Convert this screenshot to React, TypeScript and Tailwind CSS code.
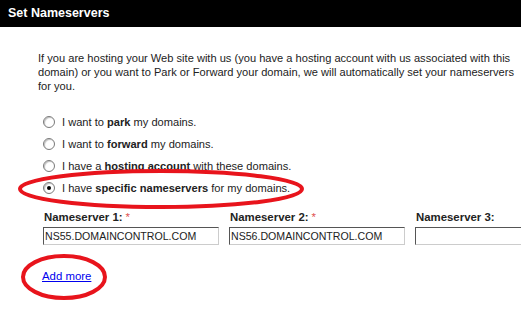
import React from "react";

const options = [
  { pre: "I want to ", bold: "park", post: " my domains." },
  { pre: "I want to ", bold: "forward", post: " my domains." },
  { pre: "I have a ", bold: "hosting account", post: " with these domains." },
  { pre: "I have ", bold: "specific nameservers", post: " for my domains." },
];

const servers = [
  { label: "Nameserver 1:", required: true, value: "NS55.DOMAINCONTROL.COM" },
  { label: "Nameserver 2:", required: true, value: "NS56.DOMAINCONTROL.COM" },
  { label: "Nameserver 3:", required: false, value: "" },
];

function Radio({ checked }: { checked: boolean }) {
  return (
    <span className="relative flex h-[12px] w-[12px] shrink-0 items-center justify-center rounded-full border border-[#7a7a7a] bg-white shadow-[inset_1px_1px_1px_rgba(0,0,0,0.25)]">
      {checked && <span className="h-[4px] w-[4px] rounded-full bg-black" />}
    </span>
  );
}

export default function App() {
  return (
    <div
      className="relative h-[333px] w-[521px] overflow-hidden bg-white text-[11.1px] text-[#222]"
      style={{ fontFamily: '"Liberation Sans", Arial, sans-serif' }}
    >
      <div className="flex h-[27px] items-center bg-black px-2">
        <h1 className="text-[12.5px] font-bold text-white">Set Nameservers</h1>
      </div>

      <div className="pl-[38px]">
        <p className="mt-[24px] leading-[14px]">
          If you are hosting your Web site with us (you have a hosting account with us associated with this
          domain) or you want to Park or Forward your domain, we will automatically set your nameservers
          for you.
        </p>

        <div className="mt-[22px] flex flex-col gap-[8px] pl-[5px]">
          {options.map((o, i) => (
            <label key={i} className="flex h-[14px] items-center gap-[7px]">
              <Radio checked={i === 3} />
              <span>
                {o.pre}
                <b>{o.bold}</b>
                {o.post}
              </span>
            </label>
          ))}
        </div>

        <div className="mt-[15px] flex gap-[10px] pl-[5px]">
          {servers.map((s) => (
            <div key={s.label} className="flex w-[176px] shrink-0 flex-col">
              <div className="pl-[1px] text-[11.4px] font-bold leading-[14px]">
                {s.label}
                {s.required && <span className="ml-[3px] font-normal text-[#e05050]">*</span>}
              </div>
              <input
                readOnly
                value={s.value}
                className="mt-[3px] h-[18px] w-full border border-t-[#555] border-l-[#555] border-r-[#ccc] border-b-[#ccc] bg-white px-[1px] text-[10.6px] text-[#222] outline-none"
                style={{ fontFamily: '"Liberation Sans", Arial, sans-serif' }}
              />
            </div>
          ))}
        </div>

        <a href="#" className="mt-[23px] ml-[4px] inline-block text-[11.4px] text-[#0000ee] underline">
          Add more
        </a>
      </div>

      <svg className="pointer-events-none absolute left-0 top-0" width="521" height="333">
        <ellipse cx="161" cy="189" rx="141" ry="18" fill="none" stroke="#e8141c" strokeWidth="4" />
        <ellipse cx="64" cy="277" rx="41" ry="21" fill="none" stroke="#e8141c" strokeWidth="4" />
      </svg>
    </div>
  );
}
